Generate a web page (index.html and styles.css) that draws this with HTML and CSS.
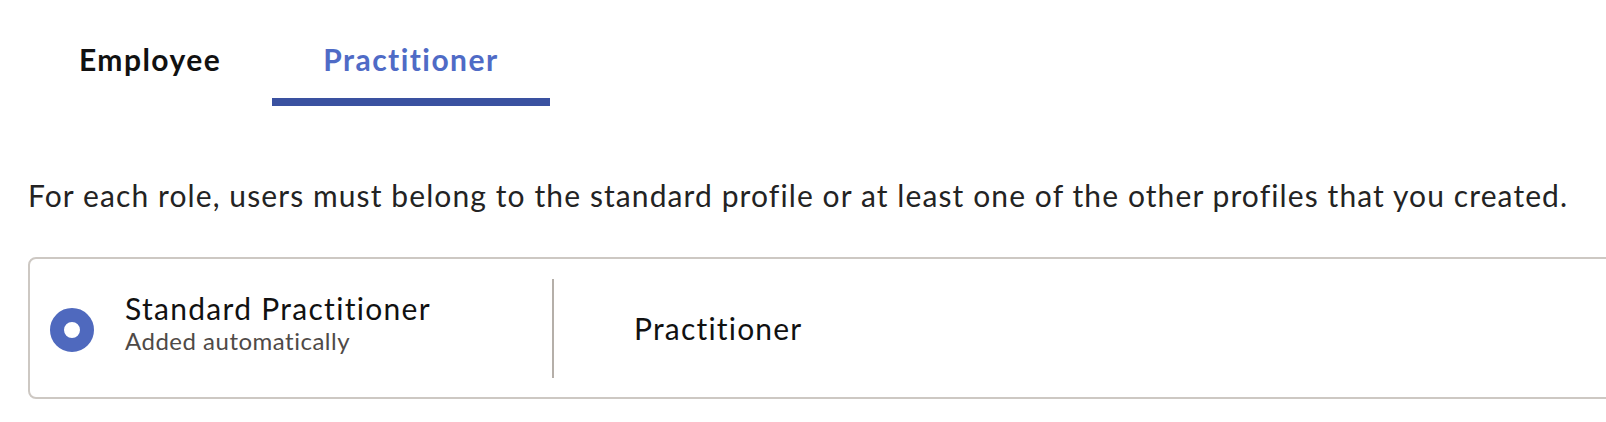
FILE: index.html
```html
<!DOCTYPE html>
<html lang="en">
<head>
<meta charset="utf-8">
<title>Profiles</title>
<link rel="stylesheet" href="styles.css">
</head>
<body>
<div class="page">
  <nav class="tabs">
    <div class="tab">Employee</div>
    <div class="tab active">Practitioner</div>
  </nav>
  <p class="desc">For each role, users must belong to the standard profile or at least one of the other profiles that you created.</p>
  <div class="card">
    <div class="choice">
      <span class="radio"></span>
      <div class="choice-text">
        <div class="choice-title">Standard Practitioner</div>
        <div class="choice-sub">Added automatically</div>
      </div>
    </div>
    <div class="divider"></div>
    <div class="role">Practitioner</div>
  </div>
</div>
</body>
</html>
```
FILE: styles.css
```css
html, body {
  margin: 0;
  padding: 0;
  background: #ffffff;
  overflow: hidden;
}
body {
  font-family: Lato, "Open Sans", Arial, sans-serif;
  color: #222222;
  letter-spacing: 1.1px;
}
.page {
  padding-left: 28px;
}
.tabs {
  display: flex;
}
.tab {
  padding: 41px 51px 21px;
  font-size: 30px;
  line-height: 36px;
  font-weight: 700;
  letter-spacing: 1.45px;
  color: #111111;
  border-bottom: 8px solid transparent;
}
.tab.active {
  color: #4f6bc6;
  border-bottom-color: #3a51a0;
}
.desc {
  margin: 71px 0 0;
  font-size: 30px;
  line-height: 36px;
  color: #232323;
  white-space: nowrap;
}
.card {
  margin-top: 44px;
  margin-right: -60px;
  height: 138px;
  border: 2px solid #cdc8c3;
  border-radius: 8px;
  display: flex;
  align-items: center;
}
.choice {
  width: 522px;
  box-sizing: border-box;
  padding-left: 20px;
  display: flex;
  align-items: center;
}
.radio {
  width: 16px;
  height: 16px;
  border: 14px solid #4f69be;
  border-radius: 50%;
  background: #ffffff;
  flex: none;
  margin-top: 4px;
}
.choice-text {
  margin-left: 31px;
  padding-bottom: 10px;
}
.choice-title {
  font-size: 30px;
  line-height: 36px;
  letter-spacing: 1.3px;
  color: #111111;
}
.choice-sub {
  font-size: 24px;
  line-height: 30px;
  letter-spacing: 0.5px;
  color: #4f4a47;
}
.divider {
  width: 2px;
  height: 99px;
  background: #b5afa9;
  flex: none;
}
.role {
  padding-left: 80px;
  font-size: 30px;
  line-height: 36px;
  letter-spacing: 1.2px;
  color: #111111;
}
```
